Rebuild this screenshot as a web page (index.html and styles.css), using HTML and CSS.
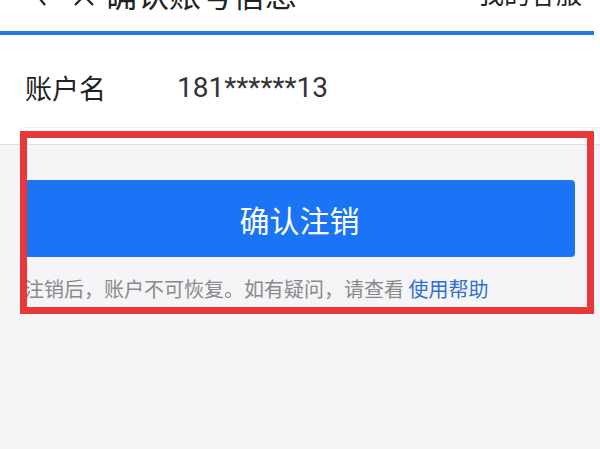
FILE: index.html
```html
<!DOCTYPE html>
<html lang="zh-CN">
<head>
<meta charset="utf-8">
<title>确认账号信息</title>
<link rel="stylesheet" href="styles.css">
</head>
<body>
<header class="topbar">
  <span class="back">
    <svg width="14" height="26" viewBox="0 0 14 26"><polyline points="12,1 2,13 12,25" fill="none" stroke="#222" stroke-width="2.2"/></svg>
  </span>
  <span class="close">
    <svg width="22" height="22" viewBox="0 0 22 22"><path d="M2 2 L20 20 M20 2 L2 20" fill="none" stroke="#222" stroke-width="2.2"/></svg>
  </span>
  <span class="title">确认账号信息</span>
  <span class="service">我的客服</span>
</header>
<div class="progress"><div class="progress-fill"></div></div>
<section class="info">
  <div class="row">
    <span class="label">账户名</span>
    <span class="value">181******13</span>
  </div>
  <div class="divider"></div>
</section>
<main class="content">
  <button class="confirm">确认注销</button>
  <p class="note">注销后，账户不可恢复。如有疑问，请查看 <a class="help">使用帮助</a></p>
</main>
<div class="highlight"></div>
</body>
</html>
```
FILE: styles.css
```css
html, body {
  margin: 0;
  padding: 0;
}
body {
  width: 600px;
  height: 449px;
  overflow: hidden;
  background: #f5f5f7;
  font-family: "Noto Sans CJK SC", "Noto Sans", sans-serif;
  position: relative;
}
.topbar {
  height: 62px;
  margin-top: -31px;
  padding: 0 18px 14px 33px;
  box-sizing: border-box;
  background: #fff;
  display: flex;
  align-items: center;
  color: #222;
}
.back {
  display: flex;
  width: 14px;
}
.close {
  display: flex;
  margin-left: 26px;
  margin-top: 6px;
}
.title {
  margin-left: 10px;
  font-size: 32px;
  line-height: 40px;
}
.service {
  margin-left: auto;
  font-size: 26px;
  line-height: 40px;
}
.progress {
  height: 4px;
  background: #fff;
}
.progress-fill {
  width: 594px;
  height: 4px;
  background: #1f78ea;
}
.info {
  background: #fff;
  height: 110px;
  border-bottom: 1px solid #dfdfe2;
  box-sizing: border-box;
}
.row {
  height: 92px;
  padding: 12px 0 0 25px;
  box-sizing: border-box;
  display: flex;
  align-items: center;
}
.label {
  width: 152px;
  font-size: 27px;
  color: #222;
}
.value {
  font-family: Roboto, "Noto Sans", sans-serif;
  font-size: 28px;
  color: #333;
}
.divider {
  height: 1px;
  margin-left: 24px;
  background: #ededf0;
}
.content {
  padding: 35px 25px 0 24px;
}
.confirm {
  display: block;
  width: 100%;
  height: 77px;
  border: none;
  border-radius: 4px;
  background: #1b74f5;
  color: #fff;
  font-family: "Noto Sans CJK SC", sans-serif;
  font-size: 30px;
  padding: 0;
}
.note {
  margin: 18px 0 0;
  font-size: 20px;
  line-height: 28px;
  color: #8a8a8c;
  white-space: nowrap;
}
.help {
  color: #2f6fd3;
}
.highlight {
  position: absolute;
  left: 20px;
  top: 131px;
  width: 574px;
  height: 183px;
  box-sizing: border-box;
  border: 7px solid #e9383c;
}
```
